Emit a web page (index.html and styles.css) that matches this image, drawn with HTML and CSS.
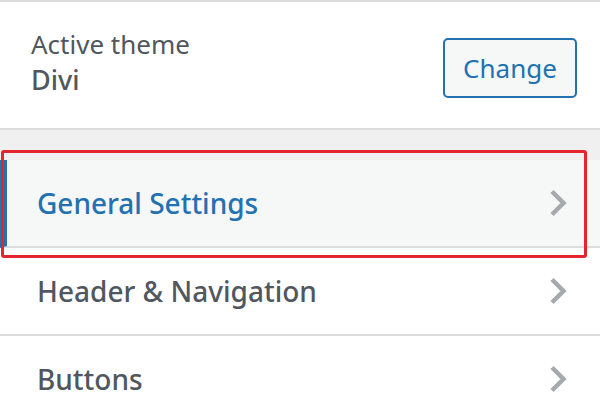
FILE: index.html
```html
<!DOCTYPE html>
<html lang="en">
<head>
<meta charset="utf-8">
<title>Customizer</title>
<link rel="stylesheet" href="styles.css">
</head>
<body>
<div class="panel">
  <section class="theme">
    <div class="theme-info">
      <div class="theme-label">Active theme</div>
      <div class="theme-name">Divi</div>
    </div>
    <button class="change-btn" type="button">Change</button>
  </section>
  <div class="spacer"></div>
  <ul class="menu">
    <li class="menu-item active">
      <span class="menu-title">General Settings</span>
      <svg class="chev" width="18" height="28" viewBox="0 0 18 28"><polyline points="3,2.5 14.5,14 3,25.5" fill="none" stroke="#a7aaad" stroke-width="4.5" stroke-linecap="butt" stroke-linejoin="miter"/></svg>
    </li>
    <li class="menu-item">
      <span class="menu-title">Header &amp; Navigation</span>
      <svg class="chev" width="18" height="28" viewBox="0 0 18 28"><polyline points="3,2.5 14.5,14 3,25.5" fill="none" stroke="#a7aaad" stroke-width="4.5" stroke-linecap="butt" stroke-linejoin="miter"/></svg>
    </li>
    <li class="menu-item">
      <span class="menu-title">Buttons</span>
      <svg class="chev" width="18" height="28" viewBox="0 0 18 28"><polyline points="3,2.5 14.5,14 3,25.5" fill="none" stroke="#a7aaad" stroke-width="4.5" stroke-linecap="butt" stroke-linejoin="miter"/></svg>
    </li>
  </ul>
  <div class="annotation"></div>
</div>
</body>
</html>
```

FILE: styles.css
```css
html, body {
  margin: 0;
  padding: 0;
  background: #ffffff;
}
body {
  font-family: "Noto Sans", "Open Sans", sans-serif;
  color: #50575e;
  width: 600px;
  height: 407px;
  overflow: hidden;
}
.panel {
  position: relative;
  border-top: 2px solid #dcdcde;
}
.theme {
  display: flex;
  justify-content: space-between;
  align-items: flex-start;
  padding: 24px 23px 30px 31px;
  height: 72px;
  border-bottom: 2px solid #dcdcde;
  background: #ffffff;
}
.theme-label {
  font-size: 26px;
  line-height: 36px;
  font-weight: 400;
}
.theme-name {
  font-size: 27px;
  line-height: 36px;
  font-weight: 500;
}
.change-btn {
  margin-top: 12px;
  width: 134px;
  height: 60px;
  border: 2px solid #2271b1;
  border-radius: 5px;
  background: #f6f7f7;
  color: #2271b1;
  font-family: "Noto Sans", "Open Sans", sans-serif;
  font-size: 26px;
  padding: 0;
  line-height: 56px;
}
.spacer {
  height: 30px;
  background: #f0f0f1;
}
.menu {
  list-style: none;
  margin: 0;
  padding: 0;
}
.menu-item {
  display: flex;
  align-items: center;
  justify-content: space-between;
  height: 86px;
  padding: 0 33px 0 37px;
  border-bottom: 2px solid #dcdcde;
  background: #ffffff;
}
.menu-item.active {
  background: #f6f7f7;
  border-left: 7px solid #2271b1;
  padding-left: 30px;
}
.menu-title {
  font-size: 28px;
  font-weight: 500;
  line-height: 36px;
  color: #50575e;
}
.menu-item.active .menu-title {
  color: #2271b1;
}
.chev {
  display: block;
}
.annotation {
  position: absolute;
  left: 1px;
  top: 148px;
  width: 580px;
  height: 102px;
  border: 3px solid #e5242e;
  border-radius: 3px;
  pointer-events: none;
}
```
